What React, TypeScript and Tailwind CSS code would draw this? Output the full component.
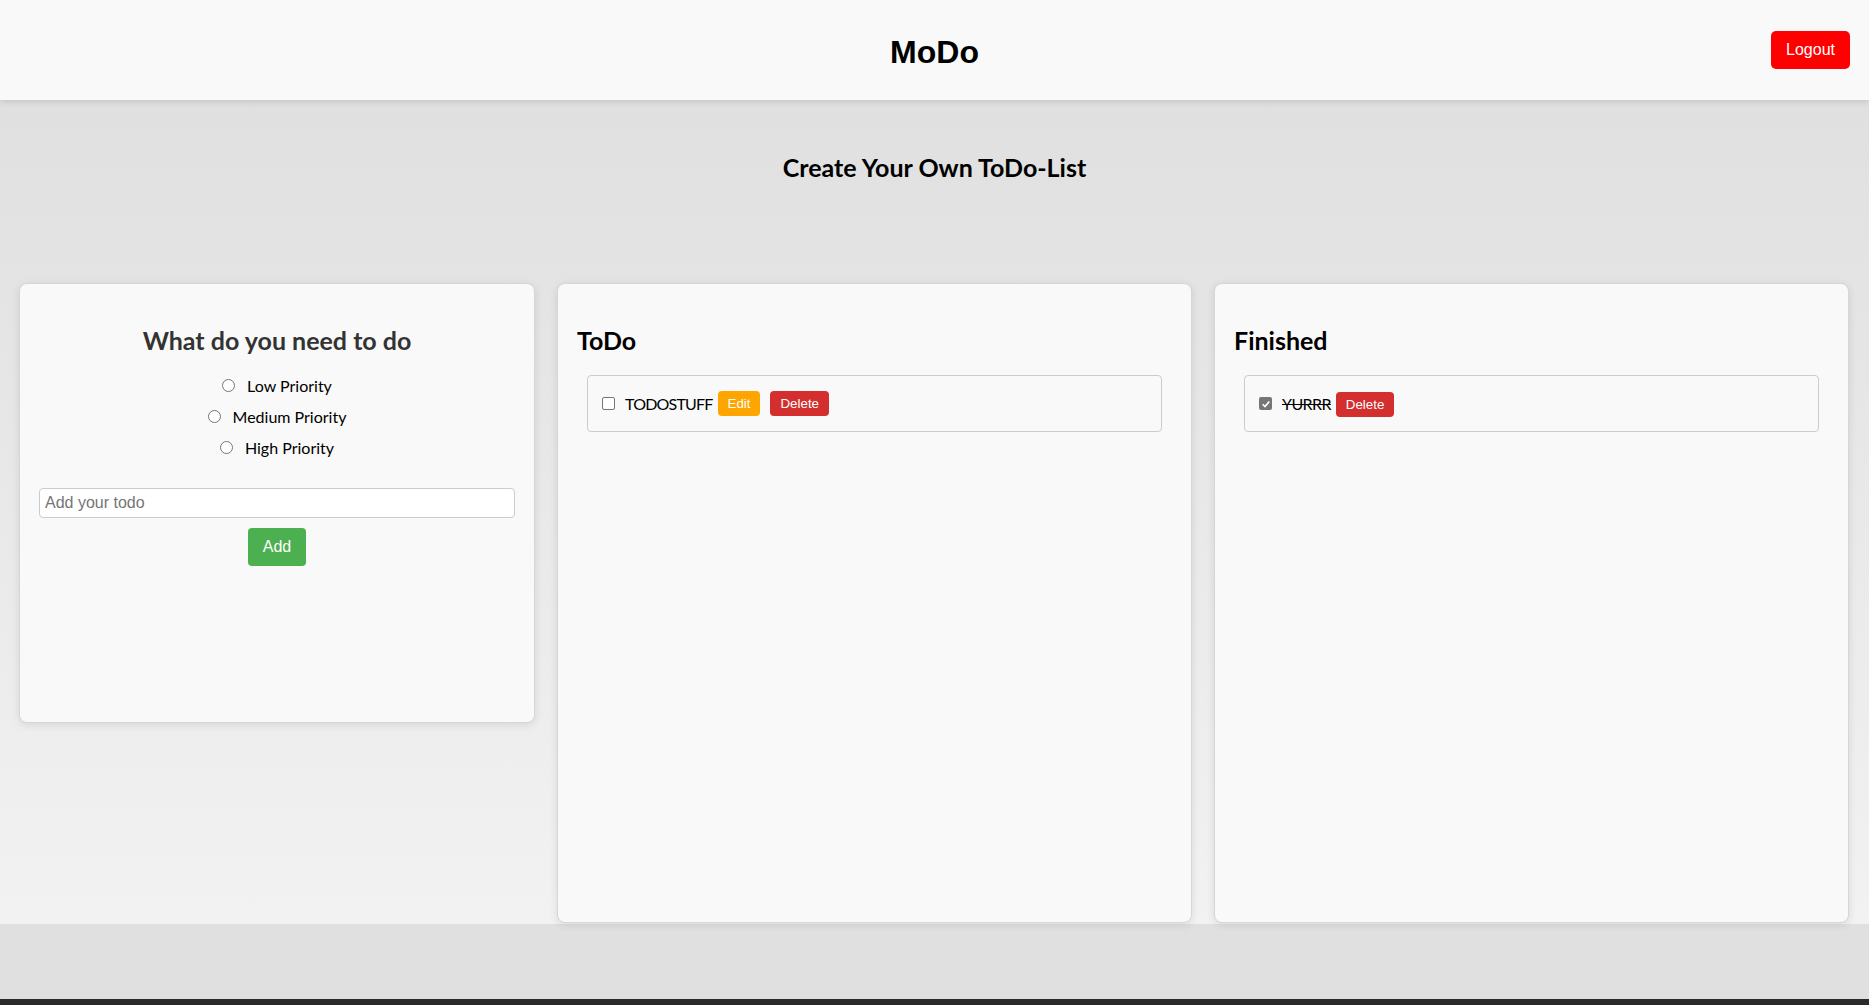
import React, { useState } from 'react';

const sans = "font-['Lato','Open_Sans',sans-serif]";
const arial = "font-['Liberation_Sans',Arial,sans-serif]";

const Radio = ({ label }: { label: string }) => (
  <label className="flex items-center justify-center gap-[12px] h-[21px] text-[16px] text-black">
    <span className="w-[13px] h-[13px] rounded-full border border-[#767676] bg-white" />
    <span>{label}</span>
  </label>
);

const Checkbox = ({ checked }: { checked?: boolean }) =>
  checked ? (
    <span className="w-[13px] h-[13px] rounded-[2px] bg-[#767676] flex items-center justify-center shrink-0">
      <svg viewBox="0 0 12 12" className="w-[10px] h-[10px]">
        <path d="M2 6.3 L4.8 9 L10 3" fill="none" stroke="white" strokeWidth="2" />
      </svg>
    </span>
  ) : (
    <span className="w-[13px] h-[13px] rounded-[2px] border border-[#767676] bg-white shrink-0" />
  );

const SmallButton = ({ label, color }: { label: string; color: string }) => (
  <button className={`${arial} ${color} text-white text-[13.33px] leading-[15px] px-[10px] py-[5px] rounded-[4px]`}>
    {label}
  </button>
);

export default function App() {
  const [todo, setTodo] = useState('');

  return (
    <div className={`${sans} min-h-[1005px] bg-[#e0e0e0] flex flex-col`}>
      <header className="h-[100px] bg-[#f9f9f9] shadow-[0_2px_6px_rgba(0,0,0,0.12)] grid grid-cols-[1fr_auto_1fr] items-center relative z-10">
        <div />
        <h1 className={`${arial} text-[32px] font-bold text-black leading-[37px] mt-[5px]`}>MoDo</h1>
        <div className="flex justify-end pr-[19px]">
          <button className={`${arial} bg-[#ff0000] text-white text-[16px] leading-[18px] px-[15px] py-[10px] rounded-[5px]`}>
            Logout
          </button>
        </div>
      </header>

      <main className="h-[824px] bg-gradient-to-b from-[#e0e0e0] to-[#f2f2f2] flex flex-col">
        <h2 className="text-center text-[25px] leading-[32px] font-bold text-black mt-[51px]">
          Create Your Own ToDo-List
        </h2>

        <div className="flex items-start gap-[22px] pl-[19px] pr-[20px] mt-[100px]">
          <section className="w-[516px] h-[440px] shrink-0 bg-[#f9f9f9] border border-[#d6d6d6] rounded-[8px] shadow-[0_2px_8px_rgba(0,0,0,0.1)] px-[19px] pt-[20px]">
            <h2 className="text-center text-[25px] leading-[32px] font-bold text-[#333] mt-[20px]">
              What do you need to do
            </h2>
            <div className="flex flex-col gap-[10px] mt-[19px]">
              <Radio label="Low Priority" />
              <Radio label="Medium Priority" />
              <Radio label="High Priority" />
            </div>
            <input
              value={todo}
              onChange={e => setTodo(e.target.value)}
              placeholder="Add your todo"
              className={`${arial} block w-full mt-[30px] h-[30px] px-[5px] text-[16px] bg-white border border-[#ccc] rounded-[4px] placeholder:text-[#757575] outline-none`}
            />
            <div className="flex justify-center mt-[10px]">
              <button className={`${arial} bg-[#4caf50] text-white text-[16px] leading-[18px] px-[15px] py-[10px] rounded-[4px]`}>
                Add
              </button>
            </div>
          </section>

          <section className="flex-1 h-[640px] bg-[#f9f9f9] border border-[#d6d6d6] rounded-[8px] shadow-[0_2px_8px_rgba(0,0,0,0.1)] px-[19px] pt-[20px]">
            <h2 className="text-[25px] leading-[32px] font-bold text-black mt-[20px]">ToDo</h2>
            <div className="mx-[10px] mt-[19px] border border-[#ccc] rounded-[4px] h-[57px] pl-[14px] flex items-center">
              <Checkbox />
              <span className="ml-[10px] text-[16px] text-black tracking-[-0.8px]">TODOSTUFF</span>
              <span className="ml-[5px] flex gap-[10px]">
                <SmallButton label="Edit" color="bg-[#ffa500]" />
                <SmallButton label="Delete" color="bg-[#d32f2f]" />
              </span>
            </div>
          </section>

          <section className="flex-1 h-[640px] bg-[#f9f9f9] border border-[#d6d6d6] rounded-[8px] shadow-[0_2px_8px_rgba(0,0,0,0.1)] px-[19px] pt-[20px]">
            <h2 className="text-[25px] leading-[32px] font-bold text-black mt-[20px]">Finished</h2>
            <div className="mx-[10px] mt-[19px] border border-[#ccc] rounded-[4px] h-[57px] pl-[14px] flex items-center">
              <Checkbox checked />
              <span className="ml-[10px] text-[16px] text-black line-through tracking-[-0.6px]">YURRR</span>
              <span className="ml-[5px]">
                <SmallButton label="Delete" color="bg-[#d32f2f]" />
              </span>
            </div>
          </section>
        </div>
      </main>

      <div className="flex-1" />
      <div className="h-[6px] bg-[#2b2b2b]" />
    </div>
  );
}
